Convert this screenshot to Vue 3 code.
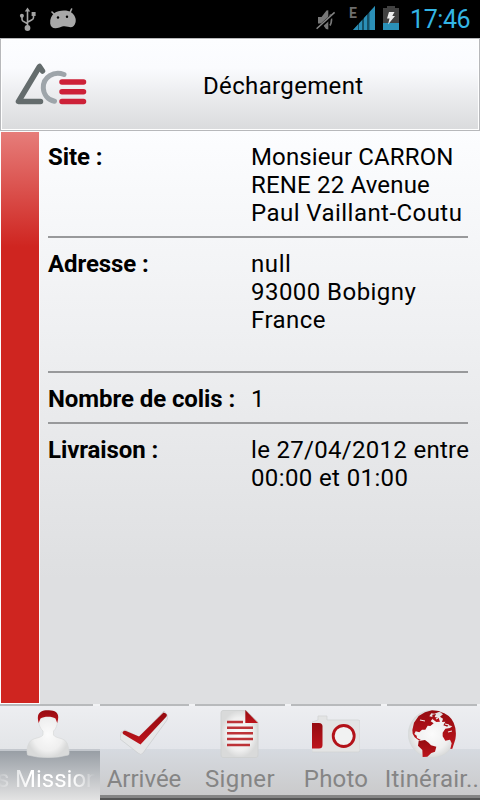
<script setup>
const rows = [
  { label: 'Site :', key: 'site', lines: ['Monsieur CARRON', 'RENE 22 Avenue', 'Paul Vaillant-Coutu'] },
  { label: 'Adresse :', key: 'adresse', lines: ['null', '93000 Bobigny', 'France', ''] },
  { label: 'Nombre de colis :', key: 'colis', lines: ['1'] },
  { label: 'Livraison :', key: 'livraison', lines: ['le 27/04/2012 entre', '00:00 et 01:00'] },
]
</script>

<template>
  <div class="screen">
    <div class="status">
      <svg class="usb" width="18" height="26" viewBox="0 0 18 26">
        <g fill="none" stroke="#a3a3a3" stroke-width="1.6">
          <path d="M8.5 3V21M3 8v4.2q0 1.6 1.5 2.2l4 2.4M14.5 7v3.5q0 1.6-1.5 2.2l-4.5 2.6" />
        </g>
        <g fill="#a3a3a3"><path d="M8.5 .5l2.7 4H5.8z" /><circle cx="8.5" cy="21" r="2.9" /><circle cx="2.9" cy="8.7" r="2" /><path d="M12.6 5h4v4h-4z" /></g>
      </svg>
      <svg class="droid" width="28" height="22" viewBox="0 0 28 22">
        <path d="M3 4l3 3M22.6 1l-1.8 4" stroke="#a8a8a8" stroke-width="1.6" stroke-linecap="round" />
        <path d="M5.5 5C8.500 2 19 1.500 22 4.200C26 7 27.500 11 26.500 14.500C25.500 18.500 23 20 19 18.800C15.500 17.800 13.500 18.300 10.500 19.400C5.500 21.200 1.600 20 1.200 15.500C.8 11 2.500 7.500 5.500 5Z" fill="#a8a8a8" />
        <circle cx="9" cy="9.500" r="1.2" /><circle cx="18" cy="8.700" r="1.2" />
      </svg>
      <span class="spacer"></span>
      <svg class="mute" width="20" height="22" viewBox="0 0 20 22">
        <path d="M2 8h3.500l5-6.500 1.800-.3V20.500L10 20 6 14.500H2z" fill="#777" />
        <path d="M14 5.500q3 5.500 0 11" fill="none" stroke="#777" stroke-width="1.7" />
        <path d="M1 20.500L19 4" stroke="#000" stroke-width="3.4" /><path d="M.6 19.700L18.600 3.400" stroke="#858585" stroke-width="1.5" />
      </svg>
      <span class="edge">E</span>
      <svg class="signal" width="22" height="24" viewBox="0 0 22 24">
        <path d="M0 24L22 0V24Z" fill="#155066" />
        <g fill="#2b8fb7"><path d="M0 24l5-5.500V24zM6 24v-6.500l3-3.300V24zM11 24V12l3-3.300V24zM16.500 24V6L22 0V24z" /></g>
      </svg>
      <svg class="battery" width="16" height="24" viewBox="0 0 16 24">
        <path d="M4 0h8v2h4v22H0V2h4z" fill="#414141" /><path d="M0 17h16v7H0z" fill="#2b91b8" />
        <path d="M6 6h5.500L9.300 10H12L5 18.500 6.500 12.500H4z" fill="#ededed" />
      </svg>
      <span class="clock">17:46</span>
    </div>

    <header class="header">
      <svg class="logo" width="74" height="42" viewBox="0 0 74 42">
        <g fill="none" stroke-linecap="round" stroke-linejoin="round">
          <path d="M27.500 8L24.500 3.500 3.500 38.500H25.500" stroke="#646c6d" stroke-width="5.500" />
          <path d="M49 11.500C39 7.500 28 14 28.300 25C28.600 31.500 33 36.800 39.500 38.300" stroke="#9ea5aa" stroke-width="5" />
          <path d="M47 19H68.500M47 28.700H68.500M47 38.500H68.500" stroke="#cd2138" stroke-width="5.500" />
        </g>
      </svg>
      <h1 class="title">Déchargement</h1>
    </header>

    <main class="content">
      <div class="strip"></div>
      <div class="details">
        <div v-for="row in rows" :key="row.key" class="row">
          <div class="label">{{ row.label }}</div>
          <div class="value">
            <div v-for="(line, i) in row.lines" :key="i" class="line" :class="row.key + '-' + i">{{ line }}</div>
          </div>
        </div>
      </div>
    </main>

    <nav class="tabs">
      <div class="tab active">
        <svg class="icon" width="48" height="48" viewBox="0 0 48 48">
          <defs>
            <radialGradient id="soft"><stop offset="0" stop-color="#fbfbfb" /><stop offset=".7" stop-color="#efefef" /><stop offset="1" stop-color="#d9dada" /></radialGradient>
            <linearGradient id="red" x2="0" y2="1"><stop stop-color="#950b10" /><stop offset="1" stop-color="#bd141c" /></linearGradient>
          </defs>
          <path d="M14.500 6C16 0 32 0 33.500 6C34 12 33 18 29.500 21V25C32 29 40 27 43 33C44.500 37 46 43 44.500 45Q24 50.500 3.500 45C2.300 41 3.300 36 5 33C8 27 16 29 19 25V21C15.500 18 14 12 14.500 6Z" fill="url(#soft)" stroke="#d5d6d7" stroke-width=".6" />
          <path d="M14.700 13C11 1 20-.2 25 .3C33 .5 36 4 33.200 13L31.500 8.500C28 6 20 6 16.500 8.500Z" fill="url(#red)" />
        </svg>
        <div class="marquee"><span class="before">s</span><span class="mission">Mission</span></div>
      </div>
      <div class="tab second">
        <svg class="icon" width="48" height="48" viewBox="0 0 48 48">
          <path d="M1 22L5 20 19 27 44 1 48 6 47 10 23 43Q21 46 18 43L0 29Z" fill="#e6e7e8" stroke="#cbced1" stroke-width=".8" />
          <path d="M2.500 22.500Q3.500 20 6 21L19 26.500 43.500 2.500Q48 3.500 46.500 6.500L20.500 34.500 3 24Z" fill="url(#red)" />
        </svg>
        <span class="caption arrivee">Arrivée</span>
      </div>
      <div class="tab">
        <svg class="icon" width="48" height="48" viewBox="0 0 48 48">
          <path d="M7 .5H30L42 12V45Q42 47.500 40 47.500H7Q5 47.500 5 45V3Q5 .5 7 .5Z" fill="url(#soft)" stroke="#d0d2d2" stroke-width="1" />
          <path d="M29.300 0L42 13H29.300Z" fill="url(#red)" />
          <path d="M11 12H27M11 17.700H37M11 23.300H37M11 29H37M11 35H34" stroke="#bd3338" stroke-width="2.600" />
        </svg>
        <span class="caption signer">Signer</span>
      </div>
      <div class="tab">
        <svg class="icon" width="48" height="48" viewBox="0 0 48 48">
          <path d="M0 12L6 10V6H15V10H46Q48 10 48 12V40Q48 42 46 42H0Z" fill="#e3e4e4" stroke="#d0d2d3" stroke-width=".7" />
          <path d="M0 13H7Q10.500 13 10.500 16.500V35Q10.500 38.500 7 38.500H0Z" fill="url(#red)" />
          <circle cx="31.700" cy="26" r="10.500" fill="#f1f2f2" stroke="#b31219" stroke-width="2.800" />
        </svg>
        <span class="caption photo">Photo</span>
      </div>
      <div class="tab">
        <svg class="icon" width="48" height="48" viewBox="0 0 48 48">
          <circle cx="24" cy="24" r="23.700" fill="url(#soft)" stroke="#d4d6d7" stroke-width=".6" />
          <g fill="url(#red)" transform="scale(.3333) translate(-24 -30)">
            <path d="M37 90L42 68 56 48 75 37 96 31 122 34 103 41 94 40 88 49 101 52 92 64 101 70 91 78 83 77 76 89 66 89 58 97 47 94 43 102 50 107 51 114 62 119 58 122 44 112 38 101Z" />
            <path d="M56 123L75 120 86 128 93 136 109 140 105 155 94 159 82 170 68 171 67 150 54 137Z" />
            <path d="M119 35Q149 42 161 68Q171 91 166 118L157 146 151 147 155 130 150 119 136 122 128 109 128 98 136 86 150 84 157 79 145 75 142 80 130 76 136 65 126 66 129 56 120 50 129 43Z" />
            <path d="M97 44L108 42 104 51 116 54 120 65 109 66 97 57Z" />
          </g>
          <path d="M28 9l2-1M37 14l4 1M12 10l5 1M40 22l4-1" stroke="#f0e8e8" stroke-width="1.200" />
        </svg>
        <span class="caption itineraire">Itinérair..</span>
      </div>
    </nav>
  </div>
</template>

<style>
body { margin: 0; background: #fff; }
</style>

<style scoped>
.screen { width: 480px; height: 800px; display: flex; flex-direction: column; overflow: hidden; font-family: Roboto, "Liberation Sans", sans-serif; font-size: 24px; line-height: 28px; color: #000; }
.status { height: 38px; flex: none; background: #000; display: flex; box-sizing: border-box; padding: 6px 0 0 19px; }
.usb { margin-top: 1px; }
.droid { margin: 2px 0 0 12px; }
.spacer { flex: 1; }
.mute { margin: 3px 13px 0 0; }
.edge { width: 7px; height: 14px; line-height: 14px; font-size: 14px; font-weight: 700; color: #6d6d6d; margin-right: -3px; }
.signal { margin-right: 8px; }
.battery { margin-right: 11px; }
.clock { color: #33b5e5; font-size: 25px; width: 70px; letter-spacing: -0.4px; white-space: nowrap; }
.header { height: 93px; flex: none; box-sizing: border-box; border: 1px solid #b7b8bb; box-shadow: inset 0 0 0 1px #fff; background: linear-gradient(#fcfdff 0%, #fafbfe 32%, #ebecee 62%, #dadbdd 100%); display: flex; align-items: center; padding-left: 14px; }
.logo { flex: none; margin-top: -2px; }
.title { margin: 2px 0 0 114px; font-size: 24px; font-weight: 400; line-height: 28px; letter-spacing: 0.35px; white-space: nowrap; }
.content { height: 573px; flex: none; display: flex; background: linear-gradient(#fcfdff, #ebecee 45%, #dedfe1 78%, #dedfe1); }
.strip { width: 38px; height: 571px; margin: 1px 0 0 1px; flex: none; background: linear-gradient(#e67d7a, #cf2520 115px); box-shadow: 0 0 0 1px #fcfcfd; }
.details { flex: 1; min-width: 0; margin-left: 9px; }
.row { display: flex; padding: 12px 0 9px; }
.row:not(:last-child) { background: linear-gradient(#98999b, #98999b) left bottom / 420px 2px no-repeat; padding-bottom: 11px; }
.label { width: 203px; flex: none; font-weight: 700; letter-spacing: -0.08px; white-space: nowrap; }
.value { white-space: nowrap; }
.line { height: 28px; letter-spacing: 0.45px; }
.site-0 { letter-spacing: 0.13px; }
.site-1 { letter-spacing: 0.17px; }
.livraison-0 { letter-spacing: 0.3px; }
.livraison-1 { letter-spacing: 0.38px; }
.adresse-0 { letter-spacing: 0.6px; }
.tabs { height: 96px; flex: none; display: grid; grid-template-columns: 100px 92px 96px 96px 96px; }
.tab { display: flex; flex-direction: column; align-items: center; box-sizing: border-box; height: 96px; padding-top: 6px; color: #858585; background: linear-gradient(90deg, #f1f2f4 3px, transparent 3px, transparent calc(100% - 3px), #f1f2f4 calc(100% - 3px)) top / 100% 2px no-repeat, linear-gradient(#b8babc 0 2px, #edeef1 2px, #e3e5ea 45px, #d6dae0 45px, #cacacb 91px, #858585 91px 94px, #555 94px); }
.tab.active { background: linear-gradient(90deg, #b8babc 93px, #f1f2f4 93px) top / 100% 2px no-repeat, linear-gradient(#edeef1 2px, #e3e5e8 45px, #c3c7cd 45px 47px, #989ea5 47px, #e3e3e3 96px); }
.tab.second { padding-right: 4px; background: linear-gradient(90deg, transparent calc(100% - 3px), #f1f2f4 calc(100% - 3px)) top / 100% 2px no-repeat, linear-gradient(#b8babc 0 2px, #edeef1 2px, #e3e5ea 45px, #d6dae0 45px, #cacacb 91px, #858585 91px 94px, #555 94px); }
.active .icon { margin-right: 4px; }
.icon { flex: none; display: block; }
.caption, .marquee { margin-top: 7px; white-space: nowrap; }
.caption { letter-spacing: 0.3px; }
.arrivee { letter-spacing: 0; }
.signer { letter-spacing: 0.4px; }
.photo { letter-spacing: 0.2px; }
.itineraire { letter-spacing: 0.2px; }
.marquee { width: 100px; overflow: hidden; display: flex; color: #fff; -webkit-mask: linear-gradient(90deg, transparent -4px, #000 30px, #000 72px, transparent 95px); mask: linear-gradient(90deg, transparent -4px, #000 30px, #000 72px, transparent 95px); }
.before { width: 15px; flex: none; margin-left: -3px; margin-right: 3px; }
</style>
